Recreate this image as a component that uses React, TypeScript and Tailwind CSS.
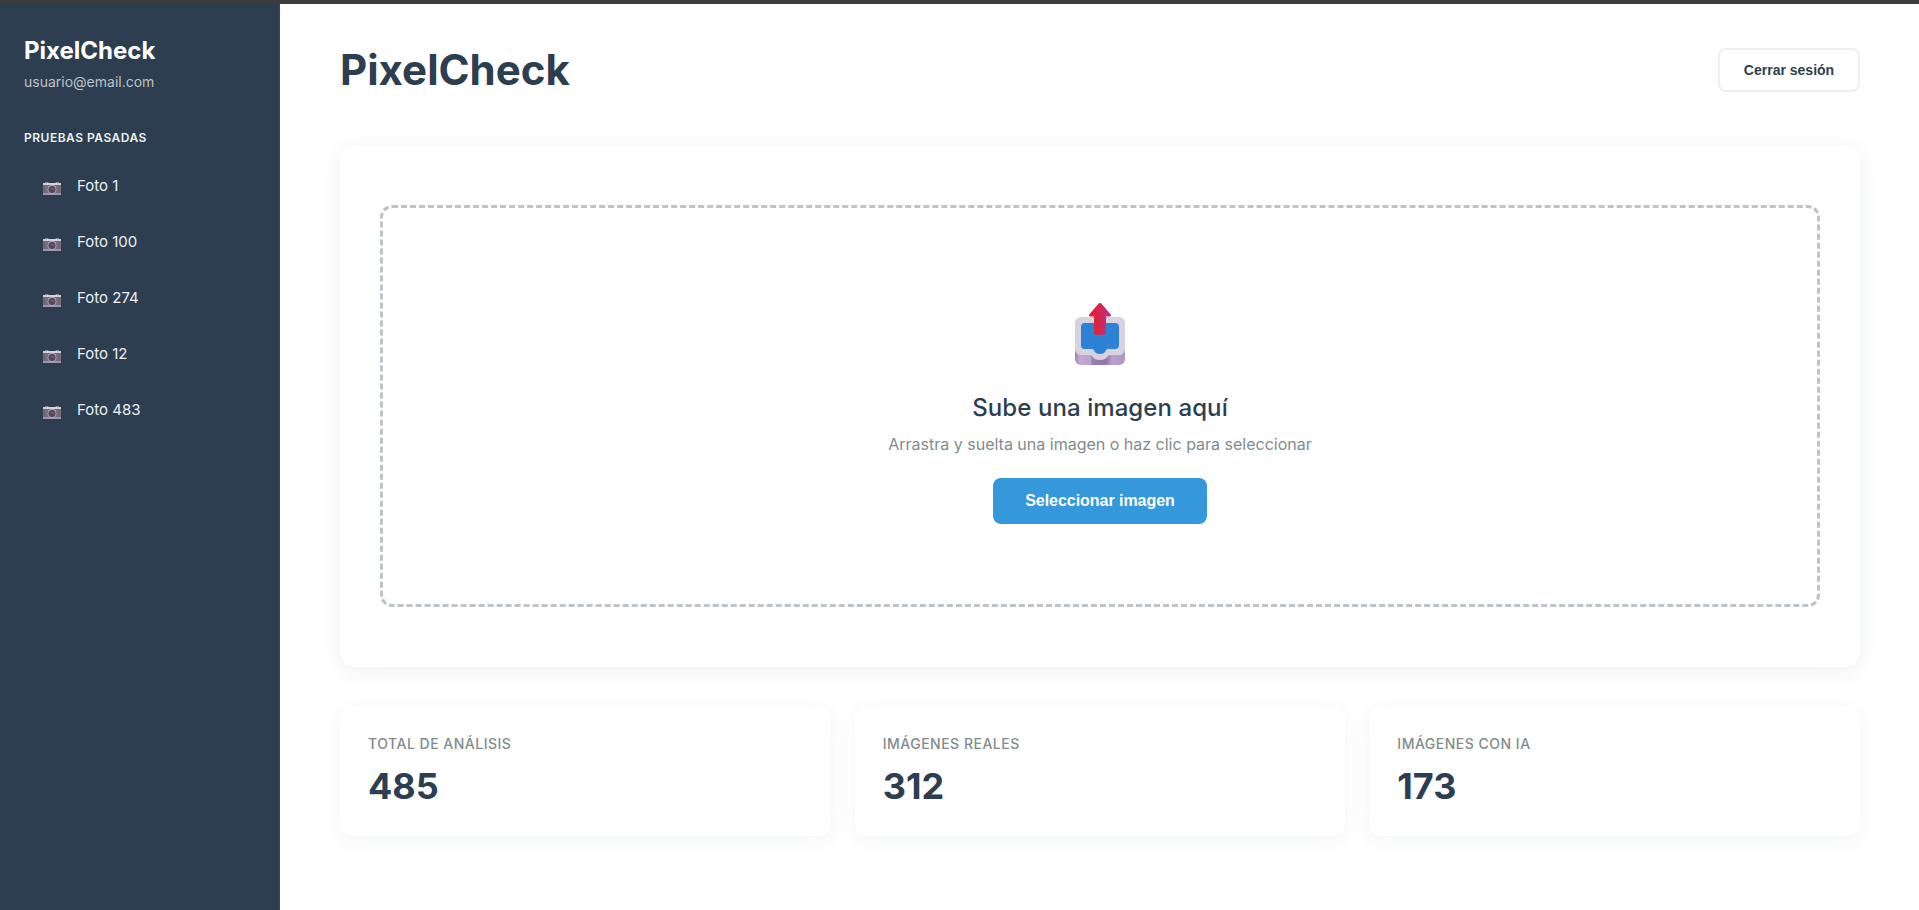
import { useId } from "react";

const photos = ["Foto 1", "Foto 100", "Foto 274", "Foto 12", "Foto 483"];

const stats = [
  { label: "Total de análisis", value: 485 },
  { label: "Imágenes reales", value: 312 },
  { label: "Imágenes con IA", value: 173 },
];

function CameraIcon() {
  return (
    <svg width="18" height="14" viewBox="0 0 18 14" className="mt-1.5 shrink-0">
      <path d="M2 0h3.500v1.400H2zM12.500 0H16v1.400h-3.500z" fill="#8d8795" />
      <rect y="1" width="18" height="2" rx=".6" fill="#d3cedb" />
      <rect y="3" width="18" height="8.500" fill="#716b79" />
      <path d="M0 11h18v1.400a.6.600 0 0 1-.6.600H.6a.6.600 0 0 1-.6-.6z" fill="#a093b4" />
      <circle cx="9" cy="7.500" r="4.500" fill="#b3acbc" />
      <circle cx="9" cy="7.500" r="3.600" fill="#4f4859" />
      <circle cx="9.500" cy="7" r="1.200" fill="#6d6677" />
    </svg>
  );
}

function OutboxIcon() {
  const id = useId();
  return (
    <svg width="50" height="64" viewBox="0 0 50 64" className="block">
      <defs>
        <linearGradient id={id + "base"} x1="0" x2="1">
          <stop offset="0" stopColor="#9a85ae" />
          <stop offset=".1" stopColor="#c0aad8" />
          <stop offset=".32" stopColor="#bba3d0" />
          <stop offset=".34" stopColor="#9780ab" />
          <stop offset=".62" stopColor="#8f76a7" />
          <stop offset=".74" stopColor="#b9a1d2" />
          <stop offset="1" stopColor="#ad97c0" />
        </linearGradient>
        <linearGradient
          id={id + "arrow"}
          gradientUnits="userSpaceOnUse"
          x1="16"
          x2="34"
          y1="10"
          y2="10"
        >
          <stop offset="0" stopColor="#e8202c" />
          <stop offset=".5" stopColor="#d42650" />
          <stop offset="1" stopColor="#be3088" />
        </linearGradient>
      </defs>
      <path d="M0 20h50v36a6 6 0 0 1-6 6H6a6 6 0 0 1-6-6z" fill={`url(#${id}base)`} />
      <path
        d="M6 14h38a6 6 0 0 1 6 6v26a6 6 0 0 1-6 6H34.500c-2 0-2 5-9.500 5s-7.500-5-9.500-5H6a6 6 0 0 1-6-6V20a6 6 0 0 1 6-6z"
        fill="#d8d2df"
      />
      <path
        d="M10 20h30a4 4 0 0 1 4 4v18a4 4 0 0 1-4 4h-7.500c-1.800 0-1.400 5-7.500 5s-5.700-5-7.500-5H10a4 4 0 0 1-4-4V24a4 4 0 0 1 4-4z"
        fill="#2d82d5"
      />
      <path
        d="M23.700.6a1.800 1.800 0 0 1 2.600 0l9.300 10.600c.9 1 .3 2.300-1 2.300H31v16.200a2 2 0 0 1-2 2h-8a2 2 0 0 1-2-2V13.500h-3.600c-1.300 0-1.900-1.300-1-2.300z"
        fill={`url(#${id}arrow)`}
      />
    </svg>
  );
}

function Sidebar() {
  return (
    <aside className="flex w-[280px] shrink-0 flex-col border-r border-[#34495e] bg-[#2c3e50] px-6 pt-8">
      <h2 className="text-[24px] leading-[29px] font-bold text-white">PixelCheck</h2>
      <p className="mt-2 text-[14px] leading-[17px] text-[#bdc3c7]">usuario@email.com</p>
      <h3 className="mt-10 text-[12px] leading-[15px] font-semibold tracking-[0.5px] text-[#ecf0f1] uppercase">
        Pruebas pasadas
      </h3>
      <ul className="mt-[17px] flex flex-col gap-2">
        {photos.map((photo) => (
          <li key={photo} className="flex h-12 items-center gap-4 pl-[19px]">
            <CameraIcon />
            <span className="text-[15px] leading-[18px] text-[#ecf0f1]">{photo}</span>
          </li>
        ))}
      </ul>
    </aside>
  );
}

export default function App() {
  return (
    <div className="flex h-screen flex-col overflow-hidden bg-white font-['Inter',sans-serif]">
      <div className="h-1 shrink-0 bg-[#3c3c3c]" />
      <div className="flex min-h-0 flex-1">
        <Sidebar />
        <main className="min-w-0 flex-1 pt-10 pr-[59px] pl-[60px]">
          <header className="flex h-[51px] items-center justify-between">
            <h1 className="text-[42px] leading-[51px] font-bold text-[#2c3e50]">PixelCheck</h1>
            <button className="h-11 w-[142px] rounded-lg border-2 border-[#ecf0f1] bg-white pt-0.5 font-['Liberation_Sans',sans-serif] text-[14px] font-semibold text-[#2c3e50]">
              Cerrar sesión
            </button>
          </header>

          <section className="mt-[50px] rounded-[16px] bg-white px-10 py-[60px] shadow-[0_4px_20px_rgba(44,62,80,0.08)]">
            <div className="flex h-[402px] flex-col items-center rounded-[12px] border-3 border-dashed border-[#bdc3c7] pt-[95px]">
              <OutboxIcon />
              <h2 className="mt-[26px] text-[24px] leading-[29px] font-medium tracking-[0.08px] text-[#2c3e50]">
                Sube una imagen aquí
              </h2>
              <p className="mt-[13px] text-[16px] leading-[19px] text-[#7f8c8d]">
                Arrastra y suelta una imagen o haz clic para seleccionar
              </p>
              <button className="mt-6 h-[46px] w-[214px] rounded-lg bg-[#3498db] font-['Liberation_Sans',sans-serif] text-[16px] font-semibold tracking-[-0.04px] text-white">
                Seleccionar imagen
              </button>
            </div>
          </section>

          <section className="mt-10 grid grid-cols-3 gap-6">
            {stats.map((stat) => (
              <div
                key={stat.label}
                className="h-[129px] rounded-[12px] bg-white px-7 pt-7 shadow-[0_4px_20px_rgba(44,62,80,0.06)]"
              >
                <p className="text-[14px] leading-[17px] font-medium tracking-[0.5px] text-[#7f8c8d] uppercase">
                  {stat.label}
                </p>
                <p className="mt-3 text-[36px] leading-[44px] font-bold text-[#2c3e50]">{stat.value}</p>
              </div>
            ))}
          </section>
        </main>
      </div>
    </div>
  );
}
